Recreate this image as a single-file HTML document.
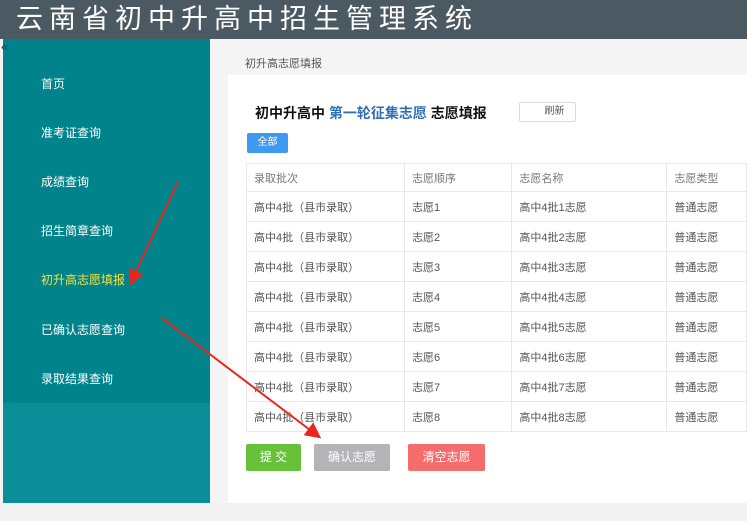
<!DOCTYPE html>
<html><head><meta charset="utf-8"><style>
*{margin:0;padding:0;box-sizing:border-box}
body{width:747px;height:521px;overflow:hidden;background:#f2f2f2;font-family:"Liberation Sans","Noto Sans CJK SC",sans-serif;position:relative}
.hd{position:absolute;left:0;top:0;width:747px;height:39px;background:#4b5a62;color:#fff;font-size:27px;letter-spacing:6px;padding-left:16px;line-height:38px}
.sb{position:absolute;left:3px;top:39px;width:207px;height:464px;background:#01838c}
.sb .low{position:absolute;left:0;top:364px;width:207px;height:100px;background:#0c8e98}
.sb a{position:absolute;left:38px;color:#fff;font-size:12px}
.main{position:absolute;left:210px;top:39px;width:537px;height:464px;background:#f4f4f4}
.crumb{position:absolute;left:245px;top:55px;font-size:11px;color:#555}
.panel{position:absolute;left:228px;top:75px;width:519px;height:428px;background:#fff}
.tt{position:absolute;left:255px;top:103px;font-size:14px;font-weight:bold;color:#111}
.tt span{color:#2f6fb5}
.rf{position:absolute;left:519px;top:102px;width:57px;height:20px;border:1px solid #ddd;border-radius:2px;font-size:10px;color:#555;text-align:center;line-height:18px;padding-left:14px}
.all{position:absolute;left:247px;top:133px;width:41px;height:20px;background:#3d9af0;color:#fff;border-radius:2px;font-size:10px;text-align:center;line-height:20px}
table{position:absolute;left:246px;top:163px;border-collapse:collapse;font-size:11px;color:#555}
td{border:1px solid #e8e8e8;height:30px;padding-left:7px}
tr:first-child td{height:28px;color:#777}
.b{position:absolute;top:444px;height:27px;color:#fff;font-size:12px;text-align:center;line-height:27px;border-radius:2px}
.foot{position:absolute;left:0;top:503px;width:747px;height:18px;background:#f2f2f2}
</style></head><body>
<div class="hd">云南省初中升高中招生管理系统</div>
<div class="sb"><div class="low"></div>
<div style="position:absolute;left:-2px;top:0;color:#333;font-size:13px">«</div>
<a style="top:36px">首页</a><a style="top:85px">准考证查询</a><a style="top:134px">成绩查询</a><a style="top:183px">招生简章查询</a><a style="top:232px;color:#f5e33a">初升高志愿填报</a><a style="top:282px">已确认志愿查询</a><a style="top:331px">录取结果查询</a></div>
<div class="main"></div>
<div class="crumb">初升高志愿填报</div>
<div class="panel"></div>
<div class="tt">初中升高中 <span>第一轮征集志愿</span> 志愿填报</div>
<div class="rf">刷新</div>
<div class="all">全部</div>
<table>
<tr><td style="width:159px">录取批次</td><td style="width:108px">志愿顺序</td><td style="width:156px">志愿名称</td><td style="width:80px">志愿类型</td></tr>
<tr><td>高中4批（县市录取）</td><td>志愿1</td><td>高中4批1志愿</td><td>普通志愿</td></tr>
<tr><td>高中4批（县市录取）</td><td>志愿2</td><td>高中4批2志愿</td><td>普通志愿</td></tr>
<tr><td>高中4批（县市录取）</td><td>志愿3</td><td>高中4批3志愿</td><td>普通志愿</td></tr>
<tr><td>高中4批（县市录取）</td><td>志愿4</td><td>高中4批4志愿</td><td>普通志愿</td></tr>
<tr><td>高中4批（县市录取）</td><td>志愿5</td><td>高中4批5志愿</td><td>普通志愿</td></tr>
<tr><td>高中4批（县市录取）</td><td>志愿6</td><td>高中4批6志愿</td><td>普通志愿</td></tr>
<tr><td>高中4批（县市录取）</td><td>志愿7</td><td>高中4批7志愿</td><td>普通志愿</td></tr>
<tr><td>高中4批（县市录取）</td><td>志愿8</td><td>高中4批8志愿</td><td>普通志愿</td></tr>
</table>
<div class="b" style="left:246px;width:55px;background:#67c23a">提 交</div>
<div class="b" style="left:314px;width:76px;background:#b4b4b8">确认志愿</div>
<div class="b" style="left:408px;width:77px;background:#f56c6c">清空志愿</div>
<div class="foot"></div>
<svg style="position:absolute;left:0;top:0" width="747" height="521">
<defs><marker id="m" markerWidth="8" markerHeight="8" refX="6" refY="4" orient="auto"><path d="M0,0L8,4L0,8z" fill="#e8261c"/></marker></defs>
<line x1="178" y1="182" x2="131" y2="282" stroke="#e8261c" stroke-width="2" marker-end="url(#m)"/>
<line x1="162" y1="318" x2="318" y2="436" stroke="#e8261c" stroke-width="2" marker-end="url(#m)"/>
</svg>
</body></html>
